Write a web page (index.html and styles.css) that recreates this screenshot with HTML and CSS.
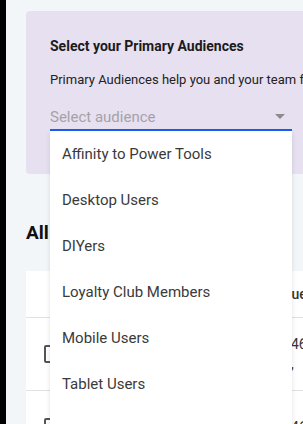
FILE: index.html
```html
<!DOCTYPE html>
<html lang="en">
<head>
    <meta charset="UTF-8">
    <meta name="viewport" content="width=device-width, initial-scale=1.0">
    <title>Audiences</title>
    <link rel="stylesheet" href="styles.css">
</head>
<body>
    <div class="app">
        <div class="main">
            <div class="primary-card">
                <h3 class="primary-title">Select your Primary Audiences</h3>
                <p class="primary-desc">Primary Audiences help you and your team focus on the people who matter most.</p>

                <div class="select-field">
                    <div class="select-box">
                        <span class="select-placeholder">Select audience</span>
                        <span class="select-caret"></span>
                    </div>

                    <!-- open dropdown -->
                    <ul class="select-menu">
                        <li>Affinity to Power Tools</li>
                        <li>Desktop Users</li>
                        <li>DIYers</li>
                        <li>Loyalty Club Members</li>
                        <li>Mobile Users</li>
                        <li>Tablet Users</li>
                        <li>Weekend Shoppers</li>
                    </ul>
                </div>
            </div>

            <div class="list-header">
                <h2>All Audiences</h2>
                <button class="btn-primary">Create</button>
            </div>

            <div class="table-card">
                <div class="table-row table-head">
                    <span class="cell-check"></span>
                    <span class="cell-name">Name</span>
                    <span class="cell-value">Unique Users</span>
                </div>
                <div class="table-row">
                    <span class="cell-check"><span class="checkbox"></span></span>
                    <span class="cell-name">Affinity to Power Tools</span>
                    <span class="cell-value">46<br>,</span>
                </div>
                <div class="table-row">
                    <span class="cell-check"><span class="checkbox"></span></span>
                    <span class="cell-name">Desktop Users</span>
                    <span class="cell-value">46</span>
                </div>
            </div>
        </div>
    </div>
</body>
</html>
```

FILE: styles.css
```css
body {
    margin: 0;
    padding: 0;
    background-color: #000;
    font-family: Roboto, "Liberation Sans", Arial, sans-serif;
    overflow: hidden;
}

.app {
    margin-left: 6px;
    height: 424px;
    background-color: #f3f6f9;
    padding: 11px 0 0 20px;
    box-sizing: border-box;
    overflow: hidden;
}

.main {
    width: 386px;
}

/* Primary audiences card */
.primary-card {
    background-color: #e7e0f1;
    border-radius: 4px;
    padding: 25px 24px 43px 24px;
}

.primary-title {
    margin: 0 0 14px 0;
    font-size: 14px;
    line-height: 20px;
    font-weight: 700;
    color: #1b1b1b;
}

.primary-desc {
    margin: 0 0 11px 0;
    font-size: 13px;
    line-height: 20px;
    color: #222;
    white-space: nowrap;
}

.select-field {
    position: relative;
    width: 242px;
}

.select-box {
    height: 30px;
    padding-top: 3px;
    box-sizing: border-box;
    display: flex;
    align-items: center;
    justify-content: space-between;
    border-bottom: 2px solid #1d5cf0;
}

.select-placeholder {
    font-size: 15px;
    color: #a3a3a6;
}

.select-caret {
    width: 0;
    height: 0;
    margin-right: 7px;
    border-left: 5px solid transparent;
    border-right: 5px solid transparent;
    border-top: 5px solid #8c8c8c;
}

.select-menu {
    position: absolute;
    top: 100%;
    left: 0;
    right: 0;
    margin: 0;
    padding: 0;
    list-style: none;
    background-color: #fff;
    box-shadow: 0 2px 5px rgba(0, 0, 0, 0.12);
    z-index: 5;
}

.select-menu li {
    height: 46px;
    line-height: 46px;
    padding-left: 12px;
    font-size: 15px;
    color: #3a3a3a;
}

/* List header */
.list-header {
    margin-top: 41px;
    height: 35px;
    display: flex;
    align-items: center;
    justify-content: space-between;
}

.list-header h2 {
    margin: 0;
    font-size: 19px;
    font-weight: 700;
    color: #111;
}

.btn-primary {
    width: 94px;
    height: 35px;
    border: none;
    border-radius: 4px;
    background-color: #1d5cf0;
    color: #fff;
    font-size: 14px;
}

/* Table */
.table-card {
    margin-top: 21px;
    background-color: #fff;
}

.table-row {
    display: flex;
    align-items: center;
    height: 72px;
    border-bottom: 1px solid #e2e2e2;
    font-size: 14px;
    color: #333;
}

.table-head {
    height: 46px;
    font-weight: 500;
}

.table-head .cell-value {
    margin-left: -28px;
    white-space: nowrap;
}

.cell-check {
    width: 46px;
    padding-left: 18px;
    box-sizing: border-box;
}

.checkbox {
    display: block;
    width: 14px;
    height: 14px;
    border: 2px solid #555;
    border-radius: 2px;
}

.cell-name {
    width: 219px;
}

.cell-value {
    line-height: 20px;
}
```
